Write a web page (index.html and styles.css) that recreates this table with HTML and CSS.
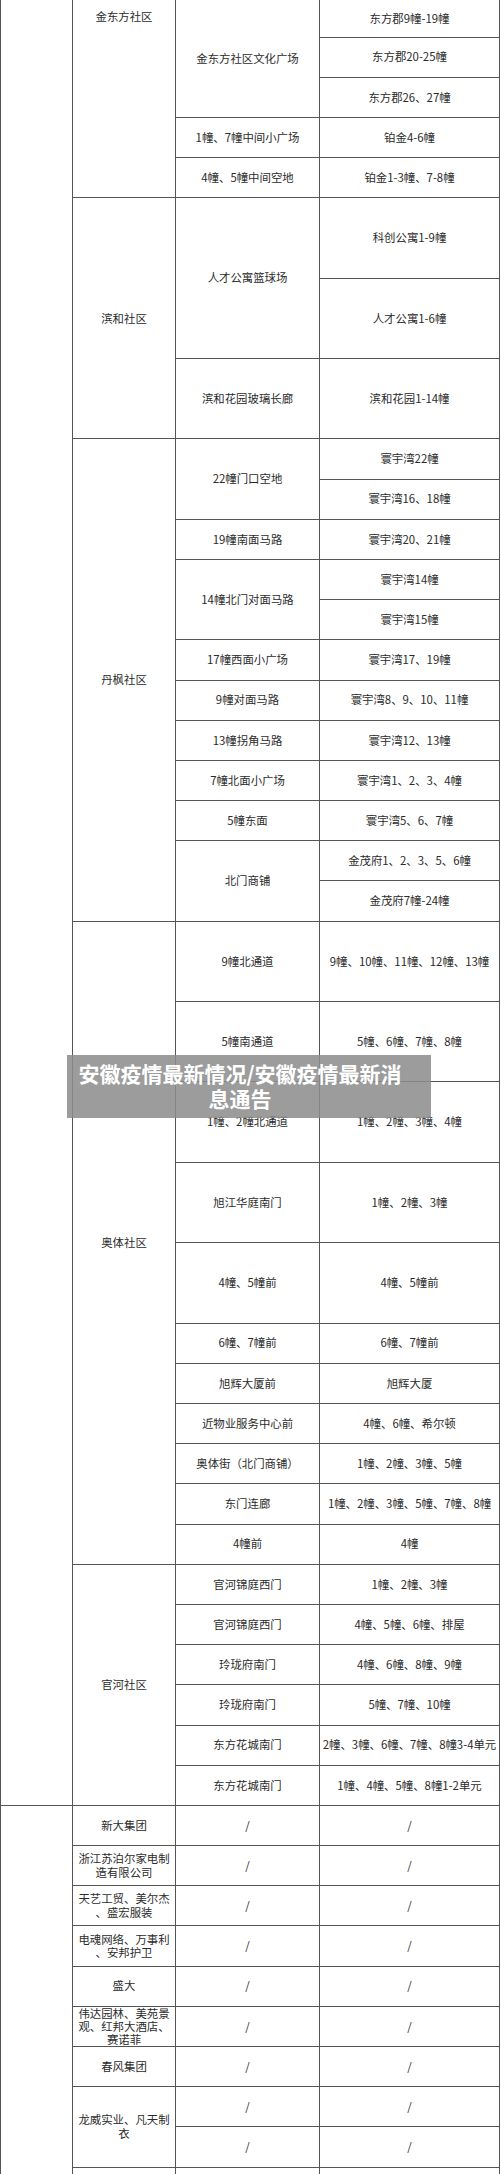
FILE: index.html
```html
<!DOCTYPE html>
<html lang="zh-CN">
<head>
<meta charset="utf-8">
<title>安徽疫情最新情况</title>
<link rel="stylesheet" href="styles.css">
</head>
<body>
<div class="page">
  <div class="grid">
    <div class="cell c1 r37"></div>
    <div class="cell c2 r5 top">金东方社区</div>
    <div class="cell c3 r3">金东方社区文化广场</div>
    <div class="cell c4">东方郡9幢-19幢</div>
    <div class="cell c4">东方郡20-25幢</div>
    <div class="cell c4">东方郡26、27幢</div>
    <div class="cell c3">1幢、7幢中间小广场</div>
    <div class="cell c4">铂金4-6幢</div>
    <div class="cell c3">4幢、5幢中间空地</div>
    <div class="cell c4">铂金1-3幢、7-8幢</div>

    <div class="cell c2 r3">滨和社区</div>
    <div class="cell c3 r2">人才公寓篮球场</div>
    <div class="cell c4">科创公寓1-9幢</div>
    <div class="cell c4">人才公寓1-6幢</div>
    <div class="cell c3">滨和花园玻璃长廊</div>
    <div class="cell c4">滨和花园1-14幢</div>

    <div class="cell c2 r12">丹枫社区</div>
    <div class="cell c3 r2">22幢门口空地</div>
    <div class="cell c4">寰宇湾22幢</div>
    <div class="cell c4">寰宇湾16、18幢</div>
    <div class="cell c3">19幢南面马路</div>
    <div class="cell c4">寰宇湾20、21幢</div>
    <div class="cell c3 r2">14幢北门对面马路</div>
    <div class="cell c4">寰宇湾14幢</div>
    <div class="cell c4">寰宇湾15幢</div>
    <div class="cell c3">17幢西面小广场</div>
    <div class="cell c4">寰宇湾17、19幢</div>
    <div class="cell c3">9幢对面马路</div>
    <div class="cell c4">寰宇湾8、9、10、11幢</div>
    <div class="cell c3">13幢拐角马路</div>
    <div class="cell c4">寰宇湾12、13幢</div>
    <div class="cell c3">7幢北面小广场</div>
    <div class="cell c4">寰宇湾1、2、3、4幢</div>
    <div class="cell c3">5幢东面</div>
    <div class="cell c4">寰宇湾5、6、7幢</div>
    <div class="cell c3 r2">北门商铺</div>
    <div class="cell c4">金茂府1、2、3、5、6幢</div>
    <div class="cell c4">金茂府7幢-24幢</div>

    <div class="cell c2 r11">奥体社区</div>
    <div class="cell c3">9幢北通道</div>
    <div class="cell c4">9幢、10幢、11幢、12幢、13幢</div>
    <div class="cell c3">5幢南通道</div>
    <div class="cell c4">5幢、6幢、7幢、8幢</div>
    <div class="cell c3">1幢、2幢北通道</div>
    <div class="cell c4">1幢、2幢、3幢、4幢</div>
    <div class="cell c3">旭江华庭南门</div>
    <div class="cell c4">1幢、2幢、3幢</div>
    <div class="cell c3">4幢、5幢前</div>
    <div class="cell c4">4幢、5幢前</div>
    <div class="cell c3">6幢、7幢前</div>
    <div class="cell c4">6幢、7幢前</div>
    <div class="cell c3">旭辉大厦前</div>
    <div class="cell c4">旭辉大厦</div>
    <div class="cell c3">近物业服务中心前</div>
    <div class="cell c4">4幢、6幢、希尔顿</div>
    <div class="cell c3">奥体街（北门商铺）</div>
    <div class="cell c4">1幢、2幢、3幢、5幢</div>
    <div class="cell c3">东门连廊</div>
    <div class="cell c4">1幢、2幢、3幢、5幢、7幢、8幢</div>
    <div class="cell c3">4幢前</div>
    <div class="cell c4">4幢</div>

    <div class="cell c2 r6">官河社区</div>
    <div class="cell c3">官河锦庭西门</div>
    <div class="cell c4">1幢、2幢、3幢</div>
    <div class="cell c3">官河锦庭西门</div>
    <div class="cell c4">4幢、5幢、6幢、排屋</div>
    <div class="cell c3">玲珑府南门</div>
    <div class="cell c4">4幢、6幢、8幢、9幢</div>
    <div class="cell c3">玲珑府南门</div>
    <div class="cell c4">5幢、7幢、10幢</div>
    <div class="cell c3">东方花城南门</div>
    <div class="cell c4">2幢、3幢、6幢、7幢、8幢3-4单元</div>
    <div class="cell c3">东方花城南门</div>
    <div class="cell c4">1幢、4幢、5幢、8幢1-2单元</div>

    <div class="cell c1 r10"></div>
    <div class="cell c2">新大集团</div>
    <div class="cell c3">/</div>
    <div class="cell c4">/</div>
    <div class="cell c2">浙江苏泊尔家电制造有限公司</div>
    <div class="cell c3">/</div>
    <div class="cell c4">/</div>
    <div class="cell c2">天艺工贸、美尔杰、盛宏服装</div>
    <div class="cell c3">/</div>
    <div class="cell c4">/</div>
    <div class="cell c2">电魂网络、万事利、安邦护卫</div>
    <div class="cell c3">/</div>
    <div class="cell c4">/</div>
    <div class="cell c2">盛大</div>
    <div class="cell c3">/</div>
    <div class="cell c4">/</div>
    <div class="cell c2 tight">伟达园林、美苑景观、红邦大酒店、赛诺菲</div>
    <div class="cell c3">/</div>
    <div class="cell c4">/</div>
    <div class="cell c2">春风集团</div>
    <div class="cell c3">/</div>
    <div class="cell c4">/</div>
    <div class="cell c2 r2">龙威实业、凡天制衣</div>
    <div class="cell c3">/</div>
    <div class="cell c4">/</div>
    <div class="cell c3">/</div>
    <div class="cell c4">/</div>
    <div class="cell c2"></div>
    <div class="cell c3"></div>
    <div class="cell c4"></div>
  </div>
  <div class="caption">安徽疫情最新情况/安徽疫情最新消息通告</div>
</div>
</body>
</html>
```
FILE: styles.css
```css
html, body {
  margin: 0;
  padding: 0;
  background: #fff;
}

body {
  width: 500px;
  height: 2174px;
  overflow: hidden;
  font-family: "Noto Sans CJK SC", "Liberation Sans", sans-serif;
}

.page {
  position: relative;
  width: 500px;
  height: 2174px;
  overflow: hidden;
}

.grid {
  display: grid;
  width: 500px;
  box-sizing: border-box;
  padding: 0 1px;
  background: #555;
  column-gap: 1px;
  row-gap: 1px;
  grid-template-columns: 71px 102px 143px 179px;
  grid-template-rows:
    36.5px
    repeat(4, 39.2px)
    repeat(3, 79.4px)
    repeat(12, 39.2px)
    repeat(5, 79.4px)
    repeat(21, 39.2px)
    40px;
}

.cell {
  background: #fff;
  color: #2b2b2b;
  font-size: 11.4px;
  line-height: 13.5px;
  display: flex;
  align-items: center;
  justify-content: center;
  text-align: center;
  padding: 0 3px;
  line-break: anywhere;
}

.c1 { grid-column: 1; }
.c2 { grid-column: 2; }
.c3 { grid-column: 3; white-space: nowrap; padding: 0 1px; }
.c4 { grid-column: 4; white-space: nowrap; padding: 0 1px; }

.r2 { grid-row: span 2; }
.r3 { grid-row: span 3; }
.r5 { grid-row: span 5; }
.r6 { grid-row: span 6; }
.r10 { grid-row: span 10; }
.r11 { grid-row: span 11; }
.r12 { grid-row: span 12; }
.r37 { grid-row: span 37; }

.top {
  align-items: flex-start;
  padding-top: 10px;
}

.tight {
  line-height: 13px;
}

.caption {
  position: absolute;
  left: 67px;
  top: 1055px;
  width: 364px;
  height: 63px;
  box-sizing: border-box;
  padding: 6px 28px 0 10px;
  background: rgba(140, 140, 140, 0.86);
  color: #fff;
  font-family: "Noto Sans CJK SC", sans-serif;
  font-weight: 700;
  font-size: 21px;
  line-height: 25px;
  text-align: center;
}
```
